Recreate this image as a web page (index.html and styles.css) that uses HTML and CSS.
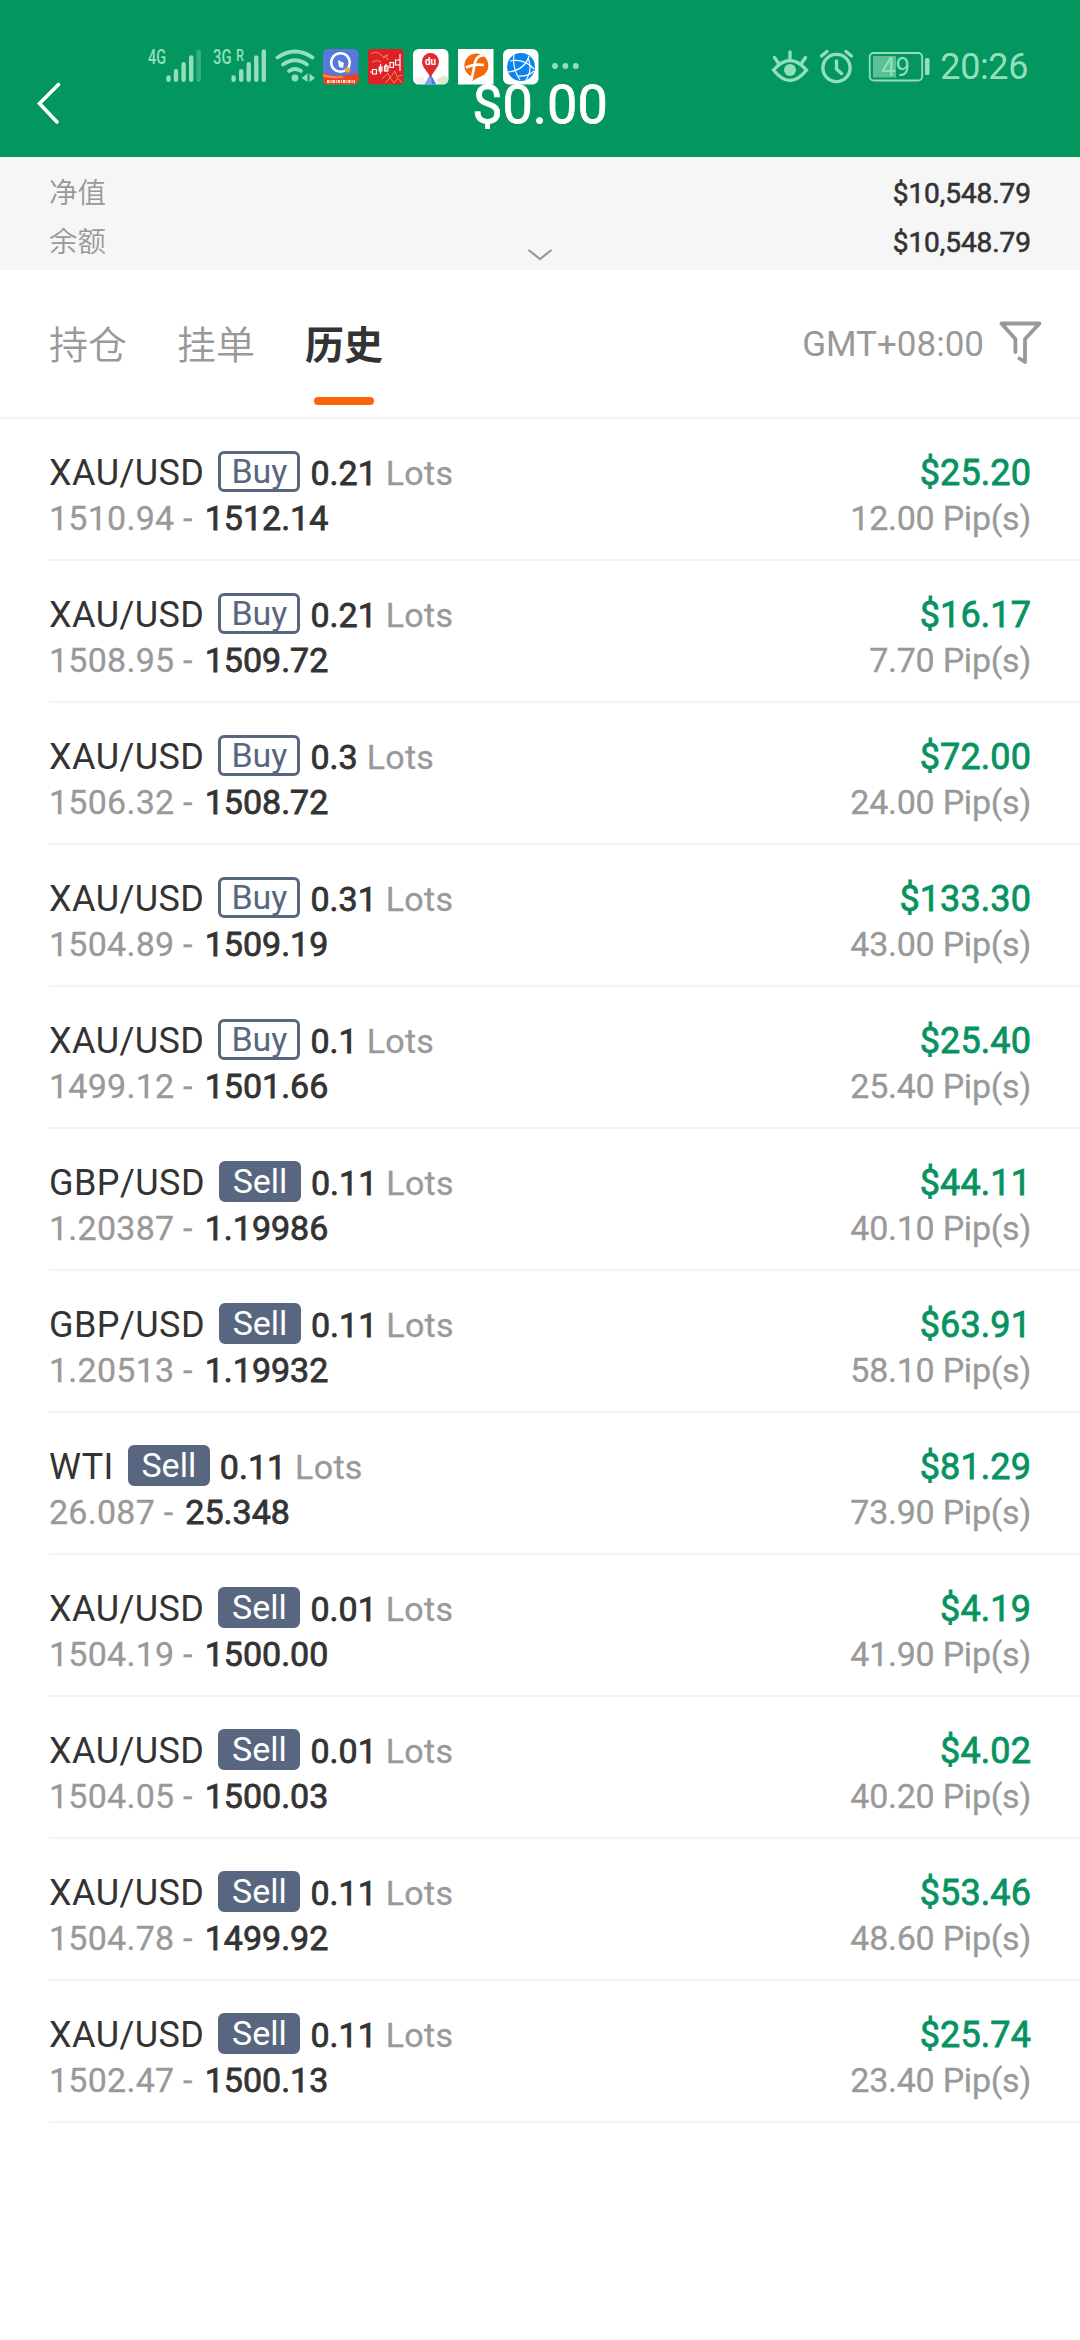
FILE: index.html
```html
<!DOCTYPE html>
<html lang="zh-CN">
<head>
<meta charset="utf-8">
<title>历史</title>
<link rel="stylesheet" href="styles.css">
</head>
<body>
<header class="header">
  <div class="status">
    <svg class="signal" width="54" height="36" viewBox="148 48 54 36">
      <text x="148" y="64" textLength="18" lengthAdjust="spacingAndGlyphs" class="net">4G</text>
      <path class="bar" d="M168.5 77.5V79.7M176 71.2V79.7M183.6 64.2V79.7M191.2 57.4V79.7"/>
      <path class="bar dim" d="M198.7 51.5V79.7"/>
    </svg>
    <svg class="signal second" width="54" height="36" viewBox="213 48 54 36">
      <text x="213" y="64" textLength="18.5" lengthAdjust="spacingAndGlyphs" class="net">3G</text>
      <text x="236" y="60.5" textLength="8" lengthAdjust="spacingAndGlyphs" class="net roam">R</text>
      <path class="bar" d="M233.6 77.5V79.7M241.2 71.2V79.7M248.7 64.2V79.7M256.3 57.4V79.7M263.8 51.5V79.7"/>
    </svg>
    <svg class="wifi" width="40" height="36" viewBox="275 48 40 36">
      <path class="stroke" d="M277.5 57.5Q295 45.500 312.500 57.500M283 64.500Q295 56 307 64.500M289 71Q295 67 301 71"/>
      <circle class="fill" cx="295" cy="78" r="3.400"/>
      <path class="fill" d="M307.500 73.500V82L301.500 78ZM309.500 73.500V82L315 78Z"/>
    </svg>
    <svg class="app" width="36" height="36" viewBox="0 0 36 36">
      <defs><clipPath id="tile"><rect width="35.500" height="35.500" rx="4.500"/></clipPath></defs>
      <g clip-path="url(#tile)">
        <rect width="36" height="36" fill="#5878dc"/>
        <path d="M0 24Q18 30 36 24V36H0Z" fill="#ef4123"/>
        <path d="M0 25Q10 28 18 27L22 28.500Q10 30 0 28Z" fill="#f78a4d"/>
        <circle cx="17.500" cy="13.500" r="9.300" fill="none" stroke="#fff" stroke-width="2.600"/>
        <path d="M15 11L21 14 20 19 16 18Z" fill="#fff"/>
        <circle cx="24.500" cy="21" r="2.800" fill="#f2a73c"/>
        <path d="M4 32.500H32" stroke="#ffe3bd" stroke-width="3" stroke-dasharray="2.500 1 1 .8"/>
      </g>
    </svg>
    <svg class="app" width="36" height="36" viewBox="0 0 36 36">
      <rect width="35.500" height="35.500" rx="4" fill="#dc2227"/>
      <path fill="none" stroke="#e98b55" stroke-width="1" d="M3 5Q8 1 13 6T20 5M15 9L18 6 20 11M14 30L20 24 22 29 27 22 29 28 34 26M17 34L22 29 26 34 30 29 34 34M4 13Q9 10 13 13"/>
      <path fill="#dc2227" stroke="#fff" stroke-width="1.200" d="M2 23H4M4.500 20.500H8.500V25H4.500ZM12.500 15V25M11.200 18H14V22H11.200ZM18 15V23M16.500 17H20V22H16.500ZM22 13.500H25.500V18.500H22ZM32 5V22M27.500 11H32V16H27.500Z"/>
    </svg>
    <svg class="app" width="36" height="36" viewBox="0 0 36 36">
      <rect width="35.500" height="35.500" rx="5.500" fill="#fff"/>
      <path d="M23 31L31 26 35 29V32Q34 35 30 35H25Z" fill="#dcecc8"/>
      <path d="M1 30L10 27 13 35H5Z" fill="#eef0f2"/>
      <path d="M17.500 25L23.500 35.500H11.500Z" fill="#3f7ee8"/>
      <path d="M17.500 25L19 35.500H12Z" fill="#7ba9ee"/>
      <path d="M17.500 29C15 22 9 19 9 12.500A8.500 8.500 0 0 1 26 12.500C26 19 20 22 17.500 29Z" fill="#e22832"/>
      <text x="12" y="16" textLength="11" lengthAdjust="spacingAndGlyphs" class="du">du</text>
    </svg>
    <svg class="app" width="36" height="36" viewBox="0 0 36 36">
      <rect width="35.500" height="35.500" fill="#fff"/>
      <path d="M14 32Q15 28 12.500 27A12 12 0 1 1 25 26.500Q19 29 14 32Z" fill="#f4680b"/>
      <path d="M28 6.500Q18 5 16.500 16L13.500 31M8 18.500Q16 14.500 26 16" fill="none" stroke="#fff" stroke-width="2.600"/>
    </svg>
    <svg class="app" width="36" height="36" viewBox="0 0 36 36">
      <rect width="35.500" height="35.500" rx="6" fill="#fff"/>
      <circle cx="18" cy="18" r="14" fill="#0a84ee"/>
      <path d="M11 6Q9 19 17 31M5 23Q22 21 26 7M7 12Q21 9 31 20M14 27Q25 28 31 22M25 9Q30 20 23 31" fill="none" stroke="#fff" stroke-width="1.200"/>
    </svg>
    <svg class="more" width="28" height="36" viewBox="0 0 28 36">
      <circle class="fill" cx="3" cy="18" r="2.900"/><circle class="fill" cx="13.400" cy="18" r="2.900"/><circle class="fill" cx="23.800" cy="18" r="2.900"/>
    </svg>
    <div class="status-right">
      <svg width="36" height="36" viewBox="772 48 36 36">
        <path class="stroke thin" d="M773.500 70Q790 51 806.500 70Q790 91 773.500 70ZM790 52V58M774.500 57.500L778 62.500M805.500 57.500L802 62.500"/>
        <circle class="fill" cx="790" cy="70" r="6"/>
      </svg>
      <svg class="alarm" width="34" height="36" viewBox="820 48 34 36">
        <circle class="stroke thin" cx="836.500" cy="68" r="13.600"/>
        <path class="stroke thin" d="M836.500 61V69L841.500 73.500M821.500 56L827 51.500M851.500 56L846 51.500"/>
      </svg>
      <svg class="battery" width="62" height="36" viewBox="868 48 62 36">
        <rect x="869.700" y="53" width="52.500" height="27.500" rx="4" fill="none" stroke="#93dfbd" stroke-width="1.800"/>
        <rect x="873" y="56" width="23" height="21.500" fill="#5bc095"/>
        <rect class="fill" x="925" y="58" width="4.500" height="17" rx="1.500"/>
        <text x="881" y="76" textLength="29" lengthAdjust="spacingAndGlyphs" class="charge">49</text>
      </svg>
      <span class="clock">20:26</span>
    </div>
  </div>
  <div class="nav">
    <svg class="back" width="28" height="48" viewBox="34 79 28 48"><path d="M58.500 84.500L39.500 103.500 57 122" fill="none" stroke="#fff" stroke-width="3.600" stroke-linecap="round"/></svg>
    <h1 class="title">$0.00</h1>
  </div>
</header>

<section class="summary">
  <div class="summary-row"><span class="label">净值</span><span class="amount">$10,548.79</span></div>
  <div class="summary-row"><span class="label">余额</span><span class="amount">$10,548.79</span></div>
  <svg class="expand" width="26" height="12" viewBox="0 0 26 12"><path d="M1.500 1L13 10 24.500 1" fill="none" stroke="#999" stroke-width="2.200"/></svg>
</section>

<nav class="tabs">
  <span class="tab">持仓</span>
  <span class="tab">挂单</span>
  <span class="tab active">历史</span>
  <span class="zone">GMT+08:00</span>
  <svg class="filter" width="44" height="46" viewBox="998 320 44 46"><path d="M1015.400 352V339L1001.500 323.500H1039.500L1025 339V362L1019.500 358.500" fill="none" stroke="#999" stroke-width="3.800" stroke-linecap="round" stroke-linejoin="round"/></svg>
</nav>

<main class="list">
  <article class="row"><div class="main"><span class="symbol">XAU/USD</span><span class="badge buy">Buy</span><b class="lots">0.21</b><span class="unit">Lots</span><span class="profit">$25.20</span></div><div class="sub"><span class="open">1510.94 -</span><b class="close">1512.14</b><span class="pips">12.00 Pip(s)</span></div></article>
  <article class="row"><div class="main"><span class="symbol">XAU/USD</span><span class="badge buy">Buy</span><b class="lots">0.21</b><span class="unit">Lots</span><span class="profit">$16.17</span></div><div class="sub"><span class="open">1508.95 -</span><b class="close">1509.72</b><span class="pips">7.70 Pip(s)</span></div></article>
  <article class="row"><div class="main"><span class="symbol">XAU/USD</span><span class="badge buy">Buy</span><b class="lots">0.3</b><span class="unit">Lots</span><span class="profit">$72.00</span></div><div class="sub"><span class="open">1506.32 -</span><b class="close">1508.72</b><span class="pips">24.00 Pip(s)</span></div></article>
  <article class="row"><div class="main"><span class="symbol">XAU/USD</span><span class="badge buy">Buy</span><b class="lots">0.31</b><span class="unit">Lots</span><span class="profit">$133.30</span></div><div class="sub"><span class="open">1504.89 -</span><b class="close">1509.19</b><span class="pips">43.00 Pip(s)</span></div></article>
  <article class="row"><div class="main"><span class="symbol">XAU/USD</span><span class="badge buy">Buy</span><b class="lots">0.1</b><span class="unit">Lots</span><span class="profit">$25.40</span></div><div class="sub"><span class="open">1499.12 -</span><b class="close">1501.66</b><span class="pips">25.40 Pip(s)</span></div></article>
  <article class="row"><div class="main"><span class="symbol">GBP/USD</span><span class="badge sell">Sell</span><b class="lots">0.11</b><span class="unit">Lots</span><span class="profit">$44.11</span></div><div class="sub"><span class="open">1.20387 -</span><b class="close">1.19986</b><span class="pips">40.10 Pip(s)</span></div></article>
  <article class="row"><div class="main"><span class="symbol">GBP/USD</span><span class="badge sell">Sell</span><b class="lots">0.11</b><span class="unit">Lots</span><span class="profit">$63.91</span></div><div class="sub"><span class="open">1.20513 -</span><b class="close">1.19932</b><span class="pips">58.10 Pip(s)</span></div></article>
  <article class="row"><div class="main"><span class="symbol">WTI</span><span class="badge sell">Sell</span><b class="lots">0.11</b><span class="unit">Lots</span><span class="profit">$81.29</span></div><div class="sub"><span class="open">26.087 -</span><b class="close">25.348</b><span class="pips">73.90 Pip(s)</span></div></article>
  <article class="row"><div class="main"><span class="symbol">XAU/USD</span><span class="badge sell">Sell</span><b class="lots">0.01</b><span class="unit">Lots</span><span class="profit">$4.19</span></div><div class="sub"><span class="open">1504.19 -</span><b class="close">1500.00</b><span class="pips">41.90 Pip(s)</span></div></article>
  <article class="row"><div class="main"><span class="symbol">XAU/USD</span><span class="badge sell">Sell</span><b class="lots">0.01</b><span class="unit">Lots</span><span class="profit">$4.02</span></div><div class="sub"><span class="open">1504.05 -</span><b class="close">1500.03</b><span class="pips">40.20 Pip(s)</span></div></article>
  <article class="row"><div class="main"><span class="symbol">XAU/USD</span><span class="badge sell">Sell</span><b class="lots">0.11</b><span class="unit">Lots</span><span class="profit">$53.46</span></div><div class="sub"><span class="open">1504.78 -</span><b class="close">1499.92</b><span class="pips">48.60 Pip(s)</span></div></article>
  <article class="row"><div class="main"><span class="symbol">XAU/USD</span><span class="badge sell">Sell</span><b class="lots">0.11</b><span class="unit">Lots</span><span class="profit">$25.74</span></div><div class="sub"><span class="open">1502.47 -</span><b class="close">1500.13</b><span class="pips">23.40 Pip(s)</span></div></article>
</main>
</body>
</html>
```
FILE: styles.css
```css
* { box-sizing: border-box; }
body {
  margin: 0;
  width: 1080px;
  min-height: 2340px;
  background: #fff;
  color: #333;
  font-family: Roboto, "Noto Sans CJK SC", sans-serif;
}
svg { display: block; flex: none; overflow: visible; }

/* Header: the status bar and the title bar share one grid cell */
.header { display: grid; height: 157px; background: #03965f; }
.status, .nav { grid-area: 1 / 1; }
.status {
  display: flex;
  align-items: flex-start;
  padding: 48px 52px 0 148px;
  color: #93dfbd;
}
.second { margin-left: 11px; }
.wifi { margin-left: 8px; }
.app { margin: 1px 0 0 9px; }
.wifi + .app { margin-left: 8px; }
.more { margin-left: 13px; }
.status-right { display: flex; margin-left: auto; }
.alarm { margin-left: 12px; }
.battery { margin-left: 14px; }
.clock { margin-left: 10px; font-size: 36px; line-height: 39px; letter-spacing: -0.4px; }
.fill, .net, .charge { fill: #93dfbd; }
.stroke, .bar { fill: none; stroke: #93dfbd; stroke-width: 4.4; stroke-linecap: round; }
.stroke { stroke-width: 3.8; }
.thin { stroke-width: 3.4; }
.dim { opacity: .35; }
.net { font-size: 20.5px; font-weight: 500; }
.roam { font-size: 16px; }
.charge { font-size: 26px; }
.du { font-size: 10px; font-weight: 700; fill: #fff; }

.nav { display: grid; z-index: 1; }
.back, .title { grid-area: 1 / 1; }
.back { margin: 79px 0 0 34px; }
.title {
  justify-self: center;
  margin: 73px 0 0;
  color: #fff;
  font-size: 54px;
  font-weight: 400;
  line-height: 64px;
  -webkit-text-stroke: .8px #fff;
}

.summary { position: relative; height: 113px; padding: 12px 49px 0; background: #f6f6f6; }
.summary-row { display: flex; justify-content: space-between; height: 49px; line-height: 49px; }
.label { color: #999; font-size: 28.5px; font-weight: 350; }
.amount { font-size: 28px; letter-spacing: -.05px; -webkit-text-stroke: .6px #333; }
.expand { position: absolute; left: 527px; bottom: 9px; }

.tabs {
  display: flex;
  gap: 50px;
  height: 149px;
  padding: 0 38px 0 49px;
  border-bottom: 2px solid #f3f3f3;
}
.tab { position: relative; color: #999; font-size: 39px; font-weight: 350; line-height: 152px; }
.active { color: #333; font-weight: 700; }
.active::after {
  content: "";
  position: absolute;
  left: 9px;
  bottom: 12px;
  width: 60px;
  height: 8px;
  border-radius: 4px;
  background: #fa6509;
}
.zone { margin-left: auto; color: #999; font-size: 35px; line-height: 150px; }
.filter { margin: 50px 0 0 -36px; }

.row { height: 142px; margin-left: 49px; padding: 32px 49px 0 0; border-bottom: 2px solid #f3f3f3; }
.main, .sub { display: flex; align-items: baseline; height: 45px; line-height: 45px; font-size: 34px; white-space: nowrap; }
.symbol { font-size: 36px; letter-spacing: .45px; }
.badge {
  align-self: flex-start;
  width: 82px;
  height: 41px;
  margin-left: 14px;
  border: 3px solid #58677f;
  border-radius: 6px;
  color: #58677f;
  font-size: 34px;
  line-height: 35px;
  text-align: center;
}
.sell { background: #58677f; color: #fff; }
.lots, .close { font-weight: 400; -webkit-text-stroke: .8px #333; }
.lots { margin-left: 10px; }
.unit { margin-left: 9px; color: #999; letter-spacing: .3px; -webkit-text-stroke: .3px #999; }
.profit { margin-left: auto; color: #07935f; font-size: 36px; letter-spacing: .1px; -webkit-text-stroke: .8px #07935f; }
.open { color: #999; letter-spacing: .25px; -webkit-text-stroke: .3px #999; }
.close { margin-left: 12px; }
.pips { margin-left: auto; color: #999; letter-spacing: -.25px; -webkit-text-stroke: .3px #999; }
```
